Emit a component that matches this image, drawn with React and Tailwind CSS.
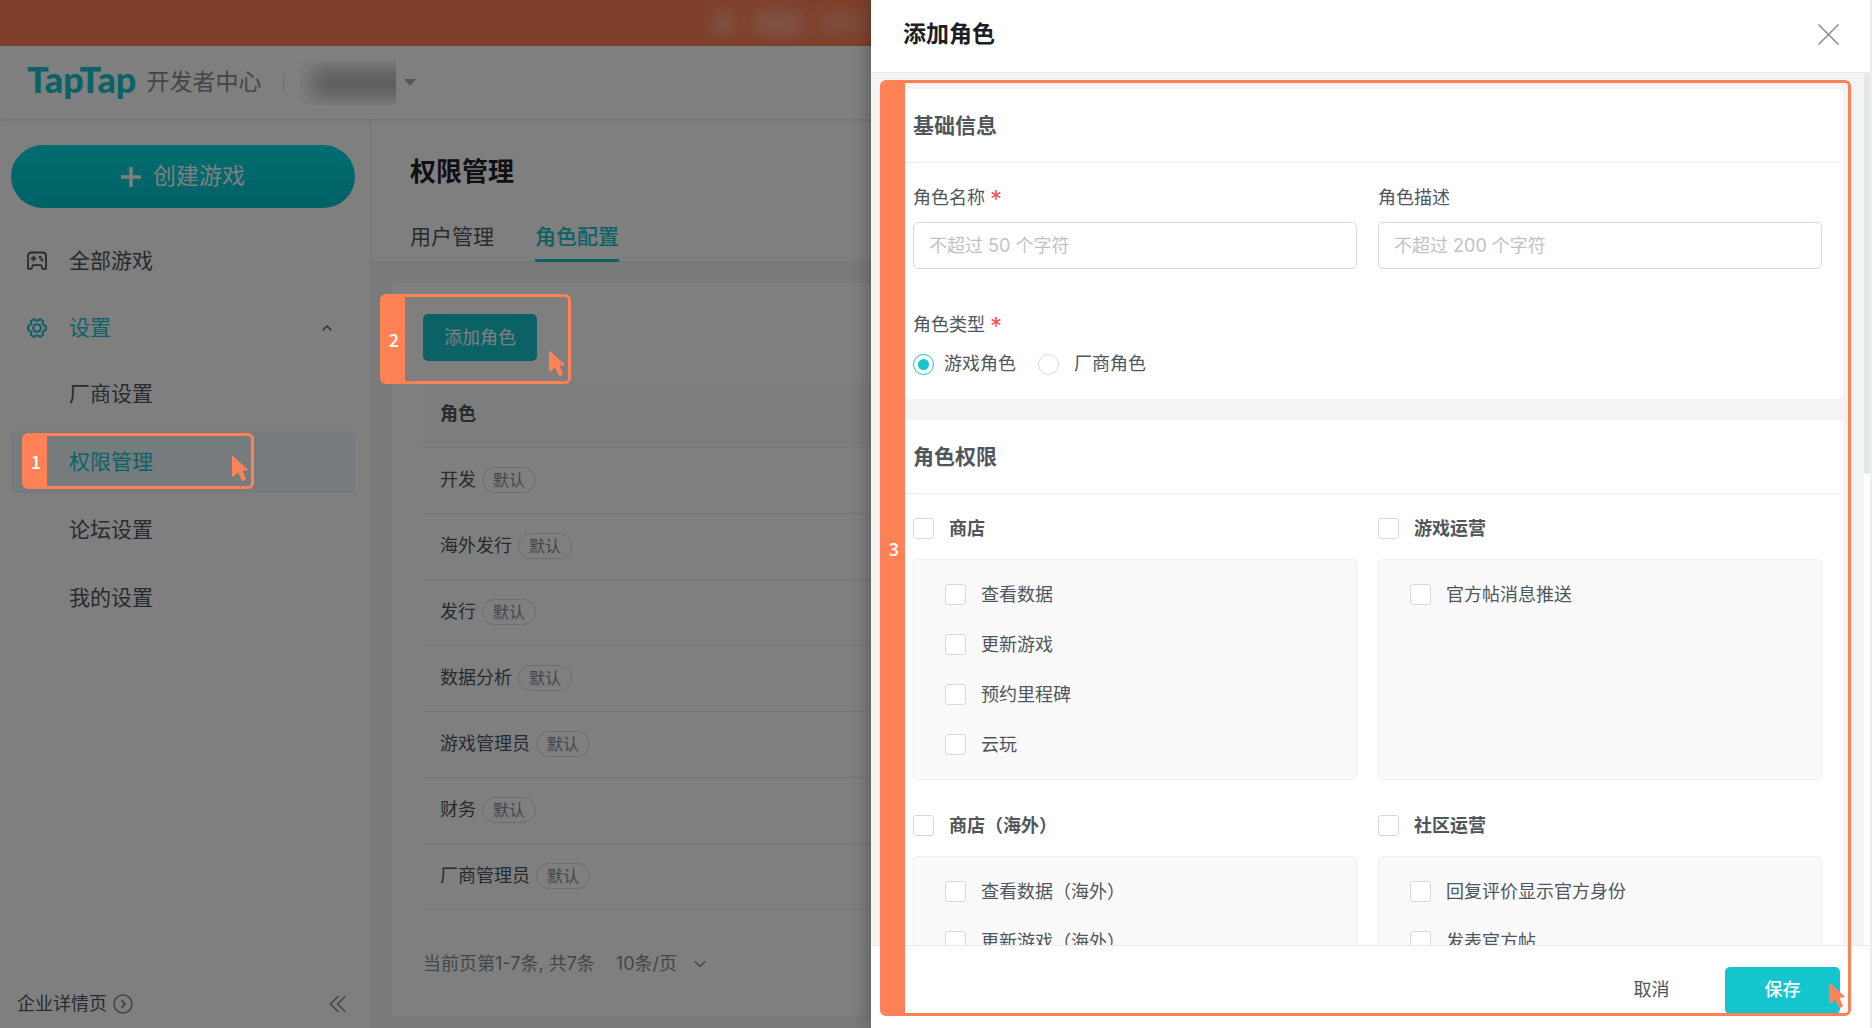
import React, { useState } from 'react';
import { ChevronDown, ChevronUp } from 'lucide-react';

const fontStack = "font-[Inter,'Noto_Sans_CJK_SC',sans-serif]";

const settingsItems = [
  { label: '厂商设置' },
  { label: '权限管理', active: true },
  { label: '论坛设置' },
  { label: '我的设置' },
];

const roles = ['开发', '海外发行', '发行', '数据分析', '游戏管理员', '财务', '厂商管理员'];

const permissionGroups = [
  { id: 'store', name: '商店', items: ['查看数据', '更新游戏', '预约里程碑', '云玩'] },
  { id: 'ops', name: '游戏运营', items: ['官方帖消息推送'] },
  { id: 'store-global', name: '商店（海外）', items: ['查看数据（海外）', '更新游戏（海外）'] },
  { id: 'community', name: '社区运营', items: ['回复评价显示官方身份', '发表官方帖'] },
];

function GamepadIcon() {
  return (
    <svg width="20" height="20" viewBox="0 0 20 20" fill="none" stroke="currentColor" strokeWidth="1.8" strokeLinejoin="round" strokeLinecap="round" aria-hidden="true">
      <path d="M4.500 1.500h11c2 0 3.500 1.400 3.500 3.400v13h-3.400l-1.500-3.800H5.900l-1.500 3.800H1v-13c0-2 1.500-3.400 3.500-3.400Z" />
      <path d="M6.500 5.500v4M4.500 7.500h4" />
      <circle cx="13.200" cy="6.300" r=".6" fill="currentColor" />
      <circle cx="15" cy="9" r=".6" fill="currentColor" />
    </svg>
  );
}

function GearIcon() {
  return (
    <svg width="22" height="20" viewBox="0 0 22 20" fill="none" stroke="currentColor" strokeWidth="2" strokeLinejoin="round" aria-hidden="true">
      <path d="M7.500 1.300c.5-.3 1-.1 1.300.3.500.8 1.200 1.200 2.200 1.200s1.700-.4 2.200-1.200c.3-.4.8-.6 1.300-.3l2 1.200c.5.300.6.800.4 1.200-.4.900-.4 1.700.1 2.500s1.100 1.100 2 1.200c.6.100.9.500.9 1v3.200c0 .5-.3.900-.9 1-.9.100-1.500.4-2 1.200s-.5 1.600-.1 2.500c.2.400.1.900-.4 1.200l-2 1.200c-.5.300-1 .1-1.300-.3-.5-.8-1.200-1.200-2.200-1.200s-1.700.4-2.200 1.200c-.3.400-.8.600-1.300.3l-2-1.200c-.5-.3-.6-.8-.4-1.200.4-.9.400-1.700-.1-2.500s-1.100-1.100-2-1.200c-.6-.1-.9-.5-.9-1V8.400c0-.5.300-.9.900-1 .9-.1 1.500-.4 2-1.200s.5-1.600.1-2.500c-.2-.4-.1-.9.4-1.200Z" />
      <circle cx="11" cy="10" r="3.800" />
    </svg>
  );
}

function Cursor() {
  return (
    <svg className="absolute right-[3px] bottom-1" width="16" height="26" viewBox="0 0 16 26" fill="#FF8257" aria-hidden="true">
      <path d="M0 1C0 .1.700-.2 1.400.4L15.300 13c.6.600.3 1.300-.4 1.400l-4.500.4 3.400 7.700c.2.500.1 1-.4 1.200l-2.200 1.200c-.5.200-1.100 0-1.300-.5L6 16.500l-4.500 3.900c-.7.600-1.500.3-1.500-.6Z" />
    </svg>
  );
}

// Numbered frame that points at one step of the walkthrough
function StepFrame({ number, className }) {
  return (
    <div className={`pointer-events-none absolute flex overflow-hidden rounded-md border-3 border-[#FF8257] ${className}`}>
      <div className="flex w-[22px] items-center justify-center bg-[#FF8257] font-['Noto_Sans_CJK_SC',sans-serif] text-lg font-medium text-white">
        {number}
      </div>
      <Cursor />
    </div>
  );
}

function TopBar() {
  return (
    <>
      <div className="flex h-[46px] shrink-0 items-center justify-center bg-[#FF8157]">
        <div className="h-6 w-5 rounded bg-white/30 blur-sm" />
        <div className="ml-5 h-6 w-12 rounded bg-white/30 blur-sm" />
        <div className="ml-4 h-5 w-[340px] rounded bg-white/20 blur-sm" />
      </div>
      <header className="z-10 flex h-[73px] shrink-0 items-center bg-white pl-[27px] shadow-[0_1px_5px_rgba(0,0,0,0.12)]">
        <a href="#home" className="flex items-center gap-[10px]">
          <span className="pb-2 font-[Lato,sans-serif] text-[36px] leading-8 font-black text-[#15C5CE]">TapTap</span>
          <span className="text-[23px] text-[#868C92]">开发者中心</span>
        </a>
        <div className="ml-[22px] h-[18px] w-px bg-[#D0D4D6]" />
        <button type="button" aria-label="切换厂商" className="ml-4 flex items-center gap-2">
          <span className="block h-11 w-24 overflow-hidden py-[10px] pl-3">
            <span className="block h-6 w-28 bg-[#3a3d40]/45 blur-[11px]" />
          </span>
          <svg width="12" height="7" viewBox="0 0 12 7" fill="#A8ADB2" aria-hidden="true">
            <path d="M0 0h12L6 7Z" />
          </svg>
        </button>
      </header>
    </>
  );
}

function Sidebar() {
  return (
    <aside className="flex w-[371px] shrink-0 flex-col border-r border-[#ECEEEE] bg-white pt-[26px] text-[21px] text-[#50565B]">
      <button
        type="button"
        className="mr-[15px] ml-[11px] flex h-[63px] items-center justify-center gap-3 rounded-full bg-linear-to-b from-[#00DBE0] to-[#00C3CC] text-[23px] text-white"
      >
        <svg width="20" height="20" viewBox="0 0 20 20" stroke="currentColor" strokeWidth="3.5" aria-hidden="true">
          <path d="M10 0v20M0 10h20" />
        </svg>
        创建游戏
      </button>
      <nav className="mt-[22px] mr-[15px] ml-[11px] flex flex-col gap-[6px]">
        <a href="#games" className="flex h-[62px] items-center pl-4">
          <span className="w-[42px]"><GamepadIcon /></span>
          全部游戏
        </a>
        <button type="button" className="flex h-[59px] items-center pl-[15px] text-[#15C5CE]">
          <span className="w-[43px]"><GearIcon /></span>
          设置
          <ChevronUp className="mr-5 ml-auto h-4 w-4 text-[#50565B]" />
        </button>
        {settingsItems.map((item) => (
          <a
            key={item.label}
            href="#settings"
            className={`flex h-[62px] items-center rounded-[5px] pl-[58px] ${item.active ? 'bg-[#ECF8FB] text-[#15C5CE]' : ''}`}
          >
            {item.label}
          </a>
        ))}
      </nav>
      <div className="mt-auto mb-[10px] flex items-center pr-[23px] pl-[17px] text-lg">
        <a href="#company" className="flex items-center gap-[6px]">
          企业详情页
          <svg width="20" height="20" viewBox="0 0 20 20" fill="none" stroke="#868C92" strokeWidth="1.5" aria-hidden="true">
            <circle cx="10" cy="10" r="9" />
            <path d="M8.500 6.300 12 10l-3.500 3.700" strokeWidth="2" />
          </svg>
        </a>
        <button type="button" aria-label="收起菜单" className="ml-auto text-[#868C92]">
          <svg width="18" height="18" viewBox="0 0 18 18" fill="none" stroke="currentColor" strokeWidth="1.5" aria-hidden="true">
            <path d="M9.500 1 1.500 9l8 8M16.500 1l-8 8 8 8" />
          </svg>
        </button>
      </div>
    </aside>
  );
}

function RoleTable() {
  return (
    <table className="w-full text-left text-lg text-[#50565B]">
      <thead>
        <tr className="h-[65px] border-b border-[#EBEDED] bg-[#FAFAFA]">
          <th className="pl-[17px] font-semibold">角色</th>
        </tr>
      </thead>
      <tbody>
        {roles.map((role) => (
          <tr key={role} className="h-[66px] border-b border-[#EBEDED]">
            <td className="pl-[17px]">
              <div className="flex items-center gap-[6px]">
                {role}
                <span className="flex h-[26px] items-center rounded-full border border-[#D5DBDD] px-[10px] text-base text-[#868C92]">默认</span>
              </div>
            </td>
          </tr>
        ))}
      </tbody>
    </table>
  );
}

function RolePage() {
  return (
    <main className="flex min-w-0 flex-1 flex-col bg-[#F4F4F4]">
      <div className="border-b border-[#E9EBEB] bg-white pt-[33px] pl-[39px]">
        <h1 className="text-[26px] leading-10 font-semibold text-[#1C2026]">权限管理</h1>
        <div className="mt-[23px] -mb-px flex gap-[41px] text-[21px] text-[#50565B]" role="tablist">
          <button type="button" role="tab" aria-selected="false" className="h-[47px] border-b-3 border-transparent">
            用户管理
          </button>
          <button type="button" role="tab" aria-selected="true" className="h-[47px] border-b-3 border-[#15C5CE] font-medium text-[#15C5CE]">
            角色配置
          </button>
        </div>
      </div>
      <div className="mx-[21px] mt-[21px] mb-3 flex-1 rounded-[5px] bg-white px-[31px] pt-[31px]">
        <button type="button" className="mb-[21px] h-[47px] rounded-[5px] bg-[#15C5CE] px-[21px] text-lg text-white">
          添加角色
        </button>
        <RoleTable />
        <div className="mt-10 flex items-center gap-[21px] text-lg text-[#868C92]">
          <span>当前页第1-7条, 共7条</span>
          <div className="flex items-center gap-3">
            <select aria-label="每页条数" className="appearance-none bg-transparent">
              <option>10条/页</option>
            </select>
            <ChevronDown className="h-5 w-5" strokeWidth={1.5} />
          </div>
        </div>
      </div>
    </main>
  );
}

function Checkbox({ id, label, bold }) {
  return (
    <label htmlFor={id} className={`flex h-[21px] items-center gap-[15px] ${bold ? 'font-semibold' : ''}`}>
      <input id={id} type="checkbox" className="h-[21px] w-[21px] shrink-0 appearance-none rounded-[3px] border border-[#D5DBDD] bg-white checked:bg-[#15C5CE]" />
      {label}
    </label>
  );
}

function Radio({ label, checked, onChange, className }) {
  return (
    <label className={`flex items-center ${className}`}>
      <input
        type="radio"
        name="role-type"
        checked={checked}
        onChange={onChange}
        className="h-[21px] w-[21px] appearance-none rounded-full border border-[#D5DBDD] bg-white checked:border-[#15C5CE] checked:bg-[#15C5CE] checked:bg-clip-content checked:p-1"
      />
      {label}
    </label>
  );
}

function Required() {
  return <span className="pt-1 text-[24px] leading-5 text-[#FF4D4F]">*</span>;
}

function Section({ title, children }) {
  return (
    <section className="rounded-[5px] bg-white">
      <h3 className="flex h-[74px] items-center border-b border-[#ECEEEE] pt-[2px] pl-[21px] text-[21px] font-semibold">{title}</h3>
      {children}
    </section>
  );
}

function RoleDrawer() {
  const [type, setType] = useState('game');

  return (
    <div
      role="dialog"
      aria-labelledby="drawer-title"
      className="absolute inset-y-0 right-0 flex w-[1001px] max-w-full flex-col border-r-2 border-[#EDEFEF] bg-white text-lg text-[#50565B] shadow-[-4px_0_16px_rgba(0,0,0,0.25)]"
    >
      <div className="flex h-[73px] shrink-0 items-center justify-between border-b border-[#E9ECEC] pr-[31px] pb-1 pl-8">
        <h2 id="drawer-title" className="pt-[2px] text-[23px] font-semibold text-[#1C2026]">添加角色</h2>
        <button type="button" aria-label="关闭">
          <svg width="21" height="21" viewBox="0 0 21 21" stroke="#868C92" strokeWidth="1.5" aria-hidden="true">
            <path d="M.5.500l20 20M20.500.500l-20 20" />
          </svg>
        </button>
      </div>

      <div className="flex min-h-0 flex-1 bg-[#F4F4F4]">
        <div className="flex flex-1 flex-col gap-[21px] overflow-hidden px-[21px] pt-4">
          <Section title="基础信息">
            <div className="p-[21px]">
              <div className="grid grid-cols-2 gap-[21px]">
                <div className="flex flex-col gap-[10px]">
                  <label htmlFor="role-name" className="flex h-7 items-center gap-[5px]">
                    角色名称 <Required />
                  </label>
                  <input id="role-name" type="text" placeholder="不超过 50 个字符" className="h-[47px] rounded-[5px] border border-[#D5DBDD] px-[15px] placeholder:text-[#BFC3C7]" />
                </div>
                <div className="flex flex-col gap-[10px]">
                  <label htmlFor="role-desc" className="flex h-7 items-center">角色描述</label>
                  <input id="role-desc" type="text" placeholder="不超过 200 个字符" className="h-[47px] rounded-[5px] border border-[#D5DBDD] px-[15px] placeholder:text-[#BFC3C7]" />
                </div>
              </div>
              <fieldset className="mt-[42px]">
                <legend className="flex h-7 items-center gap-[5px]">
                  角色类型 <Required />
                </legend>
                <div className="mt-[11px] flex items-center gap-[22px]">
                  <Radio label="游戏角色" className="gap-[10px]" checked={type === 'game'} onChange={() => setType('game')} />
                  <Radio label="厂商角色" className="gap-[15px]" checked={type === 'vendor'} onChange={() => setType('vendor')} />
                </div>
              </fieldset>
            </div>
          </Section>

          <Section title="角色权限">
            <div className="grid grid-cols-2 gap-x-[21px] gap-y-[35px] px-[21px] py-6">
              {permissionGroups.map((group) => (
                <div key={group.id} className="flex flex-col">
                  <Checkbox id={group.id} label={group.name} bold />
                  <div className="mt-5 flex flex-1 flex-col gap-[29px] rounded-[5px] border border-[#ECF0F0] bg-[#FAFAFA] py-6 pl-[31px]">
                    {group.items.map((item, i) => (
                      <Checkbox key={item} id={`${group.id}-${i}`} label={item} />
                    ))}
                  </div>
                </div>
              ))}
            </div>
          </Section>
        </div>
        <div className="w-[6px] bg-white">
          <div className="h-[46%] rounded-full bg-[#E2E7E7]" />
        </div>
      </div>

      <div className="flex h-[83px] shrink-0 items-center justify-end gap-4 border-t border-[#E9ECEC] pt-[6px] pr-[30px]">
        <button type="button" className="h-[47px] w-[115px]">取消</button>
        <button type="button" className="h-[47px] w-[115px] rounded-[5px] bg-[#15C5CE] font-medium text-white">保存</button>
      </div>
    </div>
  );
}

export default function App() {
  return (
    <div className={`relative flex h-screen flex-col overflow-hidden bg-white ${fontStack}`}>
      <TopBar />
      <div className="flex min-h-0 flex-1">
        <Sidebar />
        <RolePage />
      </div>

      <div className="absolute inset-0 z-20 bg-black/50">
        <RoleDrawer />
        <StepFrame number={1} className="top-[433px] left-[22px] h-14 w-[232px]" />
        <StepFrame number={2} className="top-[294px] left-[380px] h-[90px] w-[191px]" />
        <StepFrame number={3} className="top-20 right-[21px] bottom-3 w-[971px]" />
      </div>
    </div>
  );
}
